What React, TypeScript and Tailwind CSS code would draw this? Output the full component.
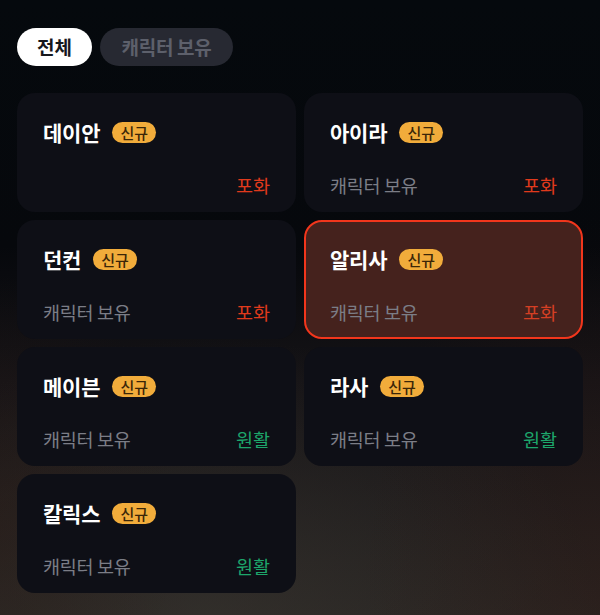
import React from "react";

type Item = { name: string; owned: boolean; status: "포화" | "원활"; selected?: boolean };

const items: Item[] = [
  { name: "데이안", owned: false, status: "포화" },
  { name: "아이라", owned: true, status: "포화" },
  { name: "던컨", owned: true, status: "포화" },
  { name: "알리사", owned: true, status: "포화", selected: true },
  { name: "메이븐", owned: true, status: "원활" },
  { name: "라사", owned: true, status: "원활" },
  { name: "칼릭스", owned: true, status: "원활" },
];

function Card({ item }: { item: Item }) {
  return (
    <div
      className={
        item.selected
          ? "h-[119px] rounded-[18px] border-[2.5px] border-[#f2361c] bg-[#45221d] px-[24px] pt-[23px] pb-[12px] flex flex-col justify-between"
          : "h-[119px] rounded-[18px] bg-[#0e0f16] px-[26px] pt-[25px] pb-[14px] flex flex-col justify-between"
      }
    >
      <div className="flex items-center gap-[12px]">
        <span className="text-[21px] font-bold text-white leading-[28px] tracking-[-0.2px]">{item.name}</span>
        <span className="h-[21px] px-[8px] rounded-full bg-[#f1ac3b] text-[#3b2608] text-[15px] font-medium leading-[21px] flex items-center">
          신규
        </span>
      </div>
      <div className="flex items-center justify-between">
        <span className="text-[18.5px] text-[#7b7d86] leading-[26px] tracking-[-0.3px]">{item.owned ? "캐릭터 보유" : ""}</span>
        <span
          className={
            item.status === "포화"
              ? item.selected
                ? "text-[18.5px] text-[#d43f24] leading-[26px]"
                : "text-[18.5px] text-[#e03a1c] leading-[26px]"
              : "text-[18.5px] text-[#1da66b] leading-[26px]"
          }
        >
          {item.status}
        </span>
      </div>
    </div>
  );
}

export default function App() {
  return (
    <div
      className="w-[600px] h-[615px] overflow-hidden bg-[linear-gradient(180deg,#05090d_0%,#06080c_40%,#151316_62%,#272422_100%)] relative"
      style={{ fontFamily: '"Noto Sans CJK KR", "Noto Sans", sans-serif' }}
    >
      <div className="absolute inset-0 bg-[radial-gradient(ellipse_65%_45%_at_35%_100%,rgba(62,58,52,0.45),transparent)]" />
      <div className="absolute inset-0 bg-[radial-gradient(ellipse_40%_60%_at_100%_95%,rgba(52,26,20,0.35),transparent)]" />
      <div className="absolute inset-0 bg-[radial-gradient(ellipse_30%_40%_at_0%_85%,rgba(45,28,22,0.4),transparent)]" />
      <div className="relative px-[17px] pt-[28px]">
        <div className="flex gap-[8px]">
          <div className="h-[38px] w-[75px] rounded-full bg-white text-[#16171c] text-[19px] font-bold flex items-center justify-center">
            전체
          </div>
          <div className="h-[38px] w-[133px] rounded-full bg-[#272932] text-[#5d606b] text-[19px] font-bold flex items-center justify-center tracking-[-0.3px]">
            캐릭터 보유
          </div>
        </div>
        <div className="mt-[27px] grid grid-cols-2 gap-[8px]">
          {items.map((it) => (
            <Card key={it.name} item={it} />
          ))}
        </div>
      </div>
    </div>
  );
}
